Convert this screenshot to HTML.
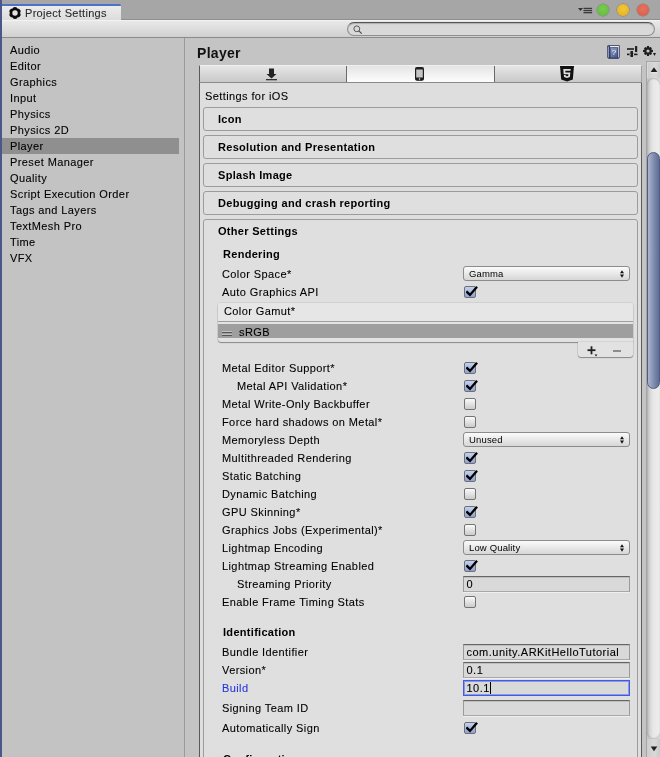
<!DOCTYPE html><html><head><meta charset="utf-8"><style>
*{margin:0;padding:0;box-sizing:border-box}
html,body{width:660px;height:757px;overflow:hidden;background:#a6a6a6;font-family:"Liberation Sans",sans-serif}
.t{position:absolute;white-space:nowrap;line-height:14px;letter-spacing:0.4px;will-change:transform;-webkit-text-stroke:0.1px currentColor}
.cb{position:absolute;width:12px;height:12px;border:1px solid #747474;border-radius:2px;background:linear-gradient(#fafafa,#cbcbcb)}
.cb.on{background:linear-gradient(#c3d0f0,#8ea2d6);border-color:#707070}
.dd{position:absolute;height:15px;border:1px solid #8c8c8c;border-radius:3px;background:linear-gradient(#fbfbfb,#d6d6d6)}
.ddt{will-change:transform;position:absolute;left:5px;top:0;font-size:9.5px;line-height:13px;color:#000;letter-spacing:0.15px}
.tf{will-change:transform;position:absolute;height:16px;border:1px solid #9a9a9a;border-top-color:#666;border-bottom-color:#a8a8a8;background:#d9d9d9;box-shadow:inset 0 1px 0 rgba(0,0,0,0.12),0 1px 0 rgba(255,255,255,0.5);font-size:11px;line-height:15px;padding-left:2.5px;color:#000;-webkit-text-stroke:0.1px #000;white-space:nowrap;overflow:hidden;letter-spacing:0.5px}
.tf.focus{border:1px solid #4558e0;box-shadow:inset 0 0 0 1px #8a98ea}
</style></head><body>

<div style="position:absolute;left:0px;top:0px;width:2px;height:757px;background:#4d5688"></div>
<div style="position:absolute;left:121px;top:19px;width:539px;height:1px;background:#8e8e8e"></div>
<div style="position:absolute;left:2px;top:4px;width:119px;height:16px;background:linear-gradient(#ececec,#dcdcdc);border-top:2px solid #4b72c4;border-radius:0 2px 0 0"></div>
<svg width="12" height="12" viewBox="0 0 12 12" style="position:absolute;left:9px;top:7px"><path d="M6.00 0.10 L7.45 0.59 L8.45 1.76 L9.96 2.04 L11.11 3.05 L11.41 4.55 L10.90 6.00 L11.41 7.45 L11.11 8.95 L9.96 9.96 L8.45 10.24 L7.45 11.41 L6.00 11.90 L4.55 11.41 L3.55 10.24 L2.04 9.96 L0.89 8.95 L0.59 7.45 L1.10 6.00 L0.59 4.55 L0.89 3.05 L2.04 2.04 L3.55 1.76 L4.55 0.59 Z" fill="#0a0a0a" stroke="#0a0a0a" stroke-width="0.4" stroke-linejoin="round"/><circle cx="6" cy="6" r="2.7" fill="#e2e2e2"/></svg>
<div class="t" style="left:24.5px;top:6.36px;font-size:11px;color:#2a2a2a;letter-spacing:0.3px;-webkit-text-stroke:0.1px #2a2a2a">Project Settings</div>
<svg width="16" height="8" viewBox="0 0 16 8" style="position:absolute;left:578px;top:7px"><path d="M0 1 L5 1 L2.5 4 Z" fill="#333"/><rect x="5.5" y="0.8" width="8.6" height="1.3" fill="#3a3a3a"/><rect x="5.5" y="2.9" width="8.6" height="1.3" fill="#3a3a3a"/><rect x="5.5" y="5" width="8.6" height="1.3" fill="#3a3a3a"/></svg>
<div style="position:absolute;left:597px;top:4px;width:12px;height:12px;border-radius:50%;background:radial-gradient(circle at 50% 40%,#78cc50,#62b63c);box-shadow:0 0 0 0.5px rgba(0,0,0,0.25)"></div>
<div style="position:absolute;left:617px;top:4px;width:12px;height:12px;border-radius:50%;background:radial-gradient(circle at 50% 40%,#f4c634,#e0ae22);box-shadow:0 0 0 0.5px rgba(0,0,0,0.25)"></div>
<div style="position:absolute;left:637px;top:4px;width:12px;height:12px;border-radius:50%;background:radial-gradient(circle at 50% 40%,#e8725f,#d35c48);box-shadow:0 0 0 0.5px rgba(0,0,0,0.25)"></div>
<div style="position:absolute;left:2px;top:20px;width:658px;height:18px;background:linear-gradient(#e9e9e9,#d0d0d0);border-bottom:1px solid #8a8a8a;border-top:1px solid #f2f2f2"></div>
<div style="position:absolute;left:347px;top:22px;width:308px;height:14px;border:1px solid #8e8e8e;border-top-color:#555;border-radius:7px;background:#d9d9d9;box-shadow:inset 0 1px 1px rgba(0,0,0,0.2)"></div>
<svg width="10" height="10" viewBox="0 0 10 10" style="position:absolute;left:353px;top:25px"><circle cx="3.8" cy="3.8" r="2.9" fill="none" stroke="#4a4a4a" stroke-width="0.9"/><path d="M5.9 5.9 L8.7 8.7" stroke="#4a4a4a" stroke-width="1.2"/></svg>
<div style="position:absolute;left:2px;top:38px;width:182px;height:719px;background:#c3c3c3"></div>
<div style="position:absolute;left:184px;top:38px;width:1px;height:719px;background:#9a9a9a"></div>
<div style="position:absolute;left:2px;top:138px;width:177px;height:16px;background:#8f8f8f"></div>
<div class="t" style="left:10px;top:43.36px;font-size:11px;color:#000;">Audio</div>
<div class="t" style="left:10px;top:59.36px;font-size:11px;color:#000;">Editor</div>
<div class="t" style="left:10px;top:75.36px;font-size:11px;color:#000;">Graphics</div>
<div class="t" style="left:10px;top:91.36px;font-size:11px;color:#000;">Input</div>
<div class="t" style="left:10px;top:107.36px;font-size:11px;color:#000;">Physics</div>
<div class="t" style="left:10px;top:123.36px;font-size:11px;color:#000;">Physics 2D</div>
<div class="t" style="left:10px;top:139.36px;font-size:11px;color:#000;">Player</div>
<div class="t" style="left:10px;top:155.36px;font-size:11px;color:#000;">Preset Manager</div>
<div class="t" style="left:10px;top:171.36px;font-size:11px;color:#000;">Quality</div>
<div class="t" style="left:10px;top:187.36px;font-size:11px;color:#000;">Script Execution Order</div>
<div class="t" style="left:10px;top:203.36px;font-size:11px;color:#000;">Tags and Layers</div>
<div class="t" style="left:10px;top:219.36px;font-size:11px;color:#000;">TextMesh Pro</div>
<div class="t" style="left:10px;top:235.36px;font-size:11px;color:#000;">Time</div>
<div class="t" style="left:10px;top:251.36px;font-size:11px;color:#000;">VFX</div>
<div style="position:absolute;left:185px;top:38px;width:475px;height:719px;background:#c4c4c4"></div>
<div class="t" style="left:197px;top:46.37px;font-size:14px;font-weight:bold;letter-spacing:0.3px;-webkit-text-stroke:0;color:#111;">Player</div>
<svg width="13" height="14" viewBox="0 0 13 14" style="position:absolute;left:607px;top:45px;will-change:transform"><defs><linearGradient id="bk" x1="0" y1="0" x2="0.6" y2="1"><stop offset="0" stop-color="#9aa8cc"/><stop offset="1" stop-color="#4c5b8a"/></linearGradient></defs><path d="M0.3 1.2 Q0.3 0.2 1.3 0.2 L12.2 0.2 L12.8 0.8 L12.8 12.5 L11.5 13.8 L1.5 13.8 L0.3 12.6 Z" fill="#28345e"/><rect x="1" y="1.5" width="1.1" height="11" fill="#8e9cc2"/><rect x="3" y="1" width="9" height="1.6" fill="#eef0f6"/><rect x="11" y="1" width="1.1" height="11.5" fill="#d8dce8"/><rect x="3.1" y="2.8" width="7.8" height="10.2" fill="url(#bk)" stroke="#2a365f" stroke-width="0.6"/><text x="7" y="10" font-family="Liberation Sans" font-size="8" fill="#ffffff" text-anchor="middle">?</text></svg>
<svg width="12" height="12" viewBox="0 0 12 12" style="position:absolute;left:626px;top:45px"><rect x="1" y="3.2" width="7" height="1.6" fill="#1e1e1e"/><rect x="9" y="1" width="2.2" height="6" rx="0.6" fill="#1e1e1e"/><rect x="1" y="8.6" width="10.5" height="1.6" fill="#1e1e1e"/><rect x="4.6" y="6" width="2.4" height="6" rx="0.6" fill="#1e1e1e"/><rect x="3.5" y="8.6" width="4.5" height="1.6" fill="#c4c4c4"/><rect x="4.6" y="6" width="2.4" height="6" rx="0.8" fill="#1e1e1e"/></svg>
<svg width="14" height="13" viewBox="0 0 14 13" style="position:absolute;left:642px;top:45px"><g transform="translate(6,6) scale(0.95)"><path d="M-1,-5.2 L1,-5.2 L1.3,-3.6 L2.7,-4.3 L4.1,-2.9 L3.3,-1.5 L5.2,-1 L5.2,1 L3.5,1.3 L4.2,2.8 L2.8,4.2 L1.4,3.4 L1,5.2 L-1,5.2 L-1.3,3.5 L-2.8,4.2 L-4.2,2.8 L-3.4,1.4 L-5.2,1 L-5.2,-1 L-3.5,-1.3 L-4.3,-2.7 L-2.9,-4.1 L-1.4,-3.3 Z" fill="#1e1e1e"/><circle r="1.7" fill="#c4c4c4"/></g><path d="M11 8 L14 8 L12.5 11 Z" fill="#1e1e1e"/></svg>
<div style="position:absolute;left:199px;top:65px;width:443px;height:692px;background:#dedede;border-left:1px solid #5a5a5a;border-right:1px solid #5a5a5a"></div>
<div style="position:absolute;left:199px;top:65px;width:443px;height:18px;background:linear-gradient(#e6e6e6,#c9c9c9);border:1px solid #5a5a5a;border-right-color:#a0a0a0;border-top:1px solid #f0f0f0;border-bottom:1px solid #8a8a8a"></div>
<div style="position:absolute;left:347px;top:66px;width:147px;height:16px;background:linear-gradient(#e4e4e4,#fdfdfd)"></div>
<div style="position:absolute;left:346px;top:66px;width:1px;height:16px;background:#6a6a6a"></div>
<div style="position:absolute;left:494px;top:66px;width:1px;height:16px;background:#6a6a6a"></div>
<svg width="12" height="13" viewBox="0 0 12 13" style="position:absolute;left:266px;top:68px"><rect x="3" y="0.5" width="5" height="5.5" fill="#222"/><path d="M0.5 6 L10.5 6 L5.5 10.5 Z" fill="#222"/><rect x="0" y="11" width="11" height="1.3" fill="#333"/></svg>
<svg width="9" height="14" viewBox="0 0 9 14" style="position:absolute;left:415px;top:67px"><rect x="0.6" y="0.6" width="7.8" height="12.6" rx="1.6" fill="#c4c4c4" stroke="#1e1e1e" stroke-width="1.2"/><rect x="0.6" y="0.6" width="7.8" height="1.9" fill="#1e1e1e"/><rect x="0.6" y="10.6" width="7.8" height="2.6" rx="0.8" fill="#1e1e1e"/><circle cx="4.5" cy="11.9" r="0.75" fill="#fff"/></svg>
<svg width="14" height="16" viewBox="0 0 14 16" style="position:absolute;left:560px;top:66px"><path d="M0 0 L14 0 L12.8 13.5 L7 15.5 L1.2 13.5 Z" fill="#111"/><path d="M3.3 3 L10.7 3 L10.5 4.8 L5.3 4.8 L5.45 6.5 L10.35 6.5 L9.9 11 L7 12 L4.1 11 L3.9 9 L5.7 9 L5.8 9.9 L7 10.3 L8.2 9.9 L8.35 8.3 L3.65 8.3 Z" fill="#e0e0e0"/></svg>
<div class="t" style="left:205px;top:89.36px;font-size:11px;color:#000;">Settings for iOS</div>
<div style="position:absolute;left:203px;top:107px;width:435px;height:24px;border:1px solid #9c9c9c;border-radius:3px;background:#dfdfdf"></div>
<div class="t" style="left:218px;top:112.36px;font-size:11px;font-weight:bold;letter-spacing:0.3px;-webkit-text-stroke:0;color:#000;">Icon</div>
<div style="position:absolute;left:203px;top:135px;width:435px;height:24px;border:1px solid #9c9c9c;border-radius:3px;background:#dfdfdf"></div>
<div class="t" style="left:218px;top:140.36px;font-size:11px;font-weight:bold;letter-spacing:0.3px;-webkit-text-stroke:0;color:#000;">Resolution and Presentation</div>
<div style="position:absolute;left:203px;top:163px;width:435px;height:24px;border:1px solid #9c9c9c;border-radius:3px;background:#dfdfdf"></div>
<div class="t" style="left:218px;top:168.36px;font-size:11px;font-weight:bold;letter-spacing:0.3px;-webkit-text-stroke:0;color:#000;">Splash Image</div>
<div style="position:absolute;left:203px;top:191px;width:435px;height:24px;border:1px solid #9c9c9c;border-radius:3px;background:#dfdfdf"></div>
<div class="t" style="left:218px;top:196.36px;font-size:11px;font-weight:bold;letter-spacing:0.3px;-webkit-text-stroke:0;color:#000;">Debugging and crash reporting</div>
<div style="position:absolute;left:203px;top:219px;width:435px;height:560px;border:1px solid #9c9c9c;border-radius:3px;background:#dfdfdf"></div>
<div class="t" style="left:218px;top:224.36px;font-size:11px;font-weight:bold;letter-spacing:0.3px;-webkit-text-stroke:0;color:#000;">Other Settings</div>
<div class="t" style="left:223px;top:247.36px;font-size:11px;font-weight:bold;letter-spacing:0.3px;-webkit-text-stroke:0;color:#000;">Rendering</div>
<div class="t" style="left:222px;top:267.36px;font-size:11px;color:#000;">Color Space*</div>
<div class="dd" style="left:463px;top:266px;width:167px"><span class="ddt">Gamma</span><svg width="4" height="9" viewBox="0 0 4 9" style="position:absolute;right:5px;top:2.5px"><path d="M2 0.2 L4 3.3 L0 3.3 Z M0 4.6 L4 4.6 L2 7.7 Z" fill="#111"/></svg></div>
<div class="t" style="left:222px;top:285.36px;font-size:11px;color:#000;">Auto Graphics API</div>
<div class="cb on" style="left:464px;top:286px"><svg width="14" height="14" viewBox="0 0 14 14" style="position:absolute;left:1px;top:-2px"><path d="M1.2 7.2 L4 9.9 L10.3 2.6" fill="none" stroke="#000" stroke-width="2.3" stroke-linecap="square" stroke-linejoin="miter"/></svg></div>
<div style="position:absolute;left:218px;top:303px;width:415px;height:39px;border-radius:3px 3px 0 3px;background:#e2e2e2;box-shadow:0 1px 1px rgba(0,0,0,0.35), 0 0 0 0.5px rgba(0,0,0,0.12)"></div>
<div style="position:absolute;left:218px;top:303px;width:415px;height:19px;background:#e6e6e6;border-bottom:1px solid #9e9e9e;border-radius:3px 3px 0 0"></div>
<div style="position:absolute;left:218px;top:324px;width:415px;height:14px;background:#9e9e9e"></div>
<div style="position:absolute;left:222px;top:332px;width:10px;height:1px;background:#555;box-shadow:0 -1px 0 #c0c0c0"></div>
<div style="position:absolute;left:222px;top:335px;width:10px;height:1px;background:#555;box-shadow:0 -1px 0 #c0c0c0"></div>
<div class="t" style="left:224px;top:304.36px;font-size:11px;color:#000;">Color Gamut*</div>
<div class="t" style="left:238.5px;top:325.36px;font-size:11px;color:#000;">sRGB</div>
<div style="position:absolute;left:578px;top:342px;width:55px;height:15px;background:#e2e2e2;border-radius:0 0 3px 3px;box-shadow:0 1px 1px rgba(0,0,0,0.35), 0 0 0 0.5px rgba(0,0,0,0.12)"></div>
<svg width="12" height="12" viewBox="0 0 12 12" style="position:absolute;left:587px;top:346px"><rect x="0.5" y="3.3" width="8" height="1.8" fill="#222"/><rect x="3.6" y="0.3" width="1.8" height="8" fill="#222"/><path d="M7.5 8.5 L10.5 8.5 L9 10.5 Z" fill="#222"/></svg>
<div style="position:absolute;left:613px;top:350px;width:8px;height:2px;background:#8c8c8c"></div>
<div class="t" style="left:222px;top:361.36px;font-size:11px;color:#000;">Metal Editor Support*</div>
<div class="cb on" style="left:464px;top:362px"><svg width="14" height="14" viewBox="0 0 14 14" style="position:absolute;left:1px;top:-2px"><path d="M1.2 7.2 L4 9.9 L10.3 2.6" fill="none" stroke="#000" stroke-width="2.3" stroke-linecap="square" stroke-linejoin="miter"/></svg></div>
<div class="t" style="left:237px;top:379.36px;font-size:11px;color:#000;">Metal API Validation*</div>
<div class="cb on" style="left:464px;top:380px"><svg width="14" height="14" viewBox="0 0 14 14" style="position:absolute;left:1px;top:-2px"><path d="M1.2 7.2 L4 9.9 L10.3 2.6" fill="none" stroke="#000" stroke-width="2.3" stroke-linecap="square" stroke-linejoin="miter"/></svg></div>
<div class="t" style="left:222px;top:397.36px;font-size:11px;color:#000;">Metal Write-Only Backbuffer</div>
<div class="cb" style="left:464px;top:398px"></div>
<div class="t" style="left:222px;top:415.36px;font-size:11px;color:#000;">Force hard shadows on Metal*</div>
<div class="cb" style="left:464px;top:416px"></div>
<div class="t" style="left:222px;top:433.36px;font-size:11px;color:#000;">Memoryless Depth</div>
<div class="dd" style="left:463px;top:432px;width:167px"><span class="ddt">Unused</span><svg width="4" height="9" viewBox="0 0 4 9" style="position:absolute;right:5px;top:2.5px"><path d="M2 0.2 L4 3.3 L0 3.3 Z M0 4.6 L4 4.6 L2 7.7 Z" fill="#111"/></svg></div>
<div class="t" style="left:222px;top:451.36px;font-size:11px;color:#000;">Multithreaded Rendering</div>
<div class="cb on" style="left:464px;top:452px"><svg width="14" height="14" viewBox="0 0 14 14" style="position:absolute;left:1px;top:-2px"><path d="M1.2 7.2 L4 9.9 L10.3 2.6" fill="none" stroke="#000" stroke-width="2.3" stroke-linecap="square" stroke-linejoin="miter"/></svg></div>
<div class="t" style="left:222px;top:469.36px;font-size:11px;color:#000;">Static Batching</div>
<div class="cb on" style="left:464px;top:470px"><svg width="14" height="14" viewBox="0 0 14 14" style="position:absolute;left:1px;top:-2px"><path d="M1.2 7.2 L4 9.9 L10.3 2.6" fill="none" stroke="#000" stroke-width="2.3" stroke-linecap="square" stroke-linejoin="miter"/></svg></div>
<div class="t" style="left:222px;top:487.36px;font-size:11px;color:#000;">Dynamic Batching</div>
<div class="cb" style="left:464px;top:488px"></div>
<div class="t" style="left:222px;top:505.36px;font-size:11px;color:#000;">GPU Skinning*</div>
<div class="cb on" style="left:464px;top:506px"><svg width="14" height="14" viewBox="0 0 14 14" style="position:absolute;left:1px;top:-2px"><path d="M1.2 7.2 L4 9.9 L10.3 2.6" fill="none" stroke="#000" stroke-width="2.3" stroke-linecap="square" stroke-linejoin="miter"/></svg></div>
<div class="t" style="left:222px;top:523.36px;font-size:11px;color:#000;">Graphics Jobs (Experimental)*</div>
<div class="cb" style="left:464px;top:524px"></div>
<div class="t" style="left:222px;top:541.36px;font-size:11px;color:#000;">Lightmap Encoding</div>
<div class="dd" style="left:463px;top:540px;width:167px"><span class="ddt">Low Quality</span><svg width="4" height="9" viewBox="0 0 4 9" style="position:absolute;right:5px;top:2.5px"><path d="M2 0.2 L4 3.3 L0 3.3 Z M0 4.6 L4 4.6 L2 7.7 Z" fill="#111"/></svg></div>
<div class="t" style="left:222px;top:559.36px;font-size:11px;color:#000;">Lightmap Streaming Enabled</div>
<div class="cb on" style="left:464px;top:560px"><svg width="14" height="14" viewBox="0 0 14 14" style="position:absolute;left:1px;top:-2px"><path d="M1.2 7.2 L4 9.9 L10.3 2.6" fill="none" stroke="#000" stroke-width="2.3" stroke-linecap="square" stroke-linejoin="miter"/></svg></div>
<div class="t" style="left:237px;top:577.36px;font-size:11px;color:#000;">Streaming Priority</div>
<div class="tf" style="left:463px;top:576px;width:167px">0</div>
<div class="t" style="left:222px;top:595.36px;font-size:11px;color:#000;">Enable Frame Timing Stats</div>
<div class="cb" style="left:464px;top:596px"></div>
<div class="t" style="left:223px;top:625.36px;font-size:11px;font-weight:bold;letter-spacing:0.3px;-webkit-text-stroke:0;color:#000;">Identification</div>
<div class="t" style="left:222px;top:645.36px;font-size:11px;color:#000;">Bundle Identifier</div>
<div class="tf" style="left:463px;top:644px;width:167px">com.unity.ARKitHelloTutorial</div>
<div class="t" style="left:222px;top:663.36px;font-size:11px;color:#000;">Version*</div>
<div class="tf" style="left:463px;top:662px;width:167px">0.1</div>
<div class="t" style="left:222px;top:681.36px;font-size:11px;color:#2538e0;">Build</div>
<div class="tf focus" style="left:463px;top:680px;width:167px">10.1<span style="display:inline-block;width:1px;height:12px;background:#000;vertical-align:-2px"></span></div>
<div class="t" style="left:222px;top:701.36px;font-size:11px;color:#000;">Signing Team ID</div>
<div class="tf" style="left:463px;top:700px;width:167px"></div>
<div class="t" style="left:222px;top:721.36px;font-size:11px;color:#000;">Automatically Sign</div>
<div class="cb on" style="left:464px;top:722px"><svg width="14" height="14" viewBox="0 0 14 14" style="position:absolute;left:1px;top:-2px"><path d="M1.2 7.2 L4 9.9 L10.3 2.6" fill="none" stroke="#000" stroke-width="2.3" stroke-linecap="square" stroke-linejoin="miter"/></svg></div>
<div class="t" style="left:223px;top:751.86px;font-size:11px;font-weight:bold;letter-spacing:0.3px;-webkit-text-stroke:0;color:#000;">Configuration</div>
<div style="position:absolute;left:646px;top:61px;width:14px;height:696px;background:linear-gradient(90deg,#c4c4c4,#d6d6d6);border-left:1px solid #a4a4a4;border-top:1px solid #a4a4a4"></div>
<div style="position:absolute;left:647px;top:62px;width:13px;height:16px;background:linear-gradient(90deg,#cdcdcd,#d9d9d9 60%,#c9c9c9);border-left:1px solid #dadada;border-top:1px solid #dadada"></div>
<svg width="8" height="7" viewBox="0 0 8 7" style="position:absolute;left:650px;top:66.5px"><path d="M4 0.2 L7.3 5 L0.7 5 Z" fill="#1e1e1e"/><rect x="0.7" y="5.3" width="6.6" height="1" fill="#eeeeee" opacity="0.8"/></svg>
<div style="position:absolute;left:647px;top:78px;width:13px;height:661px;background:linear-gradient(90deg,#b4b4b4,#d8d8d8 25%,#e8e8e8 50%,#ededed);border-radius:6.5px;box-shadow:inset 0 1px 1px rgba(0,0,0,0.18),inset 0 -1px 1px rgba(0,0,0,0.15)"></div>
<div style="position:absolute;left:647px;top:152px;width:13px;height:237px;background:linear-gradient(90deg,#aab5ce,#7d8bae 55%,#5f6d96);border:1px solid #4f5b82;border-radius:6.5px"></div>
<div style="position:absolute;left:647px;top:739px;width:13px;height:18px;background:linear-gradient(90deg,#cdcdcd,#d9d9d9 60%,#c9c9c9)"></div>
<svg width="8" height="7" viewBox="0 0 8 7" style="position:absolute;left:650px;top:745.5px"><path d="M0.7 0.5 L7.3 0.5 L4 5.3 Z" fill="#1e1e1e"/></svg>
</body></html>
